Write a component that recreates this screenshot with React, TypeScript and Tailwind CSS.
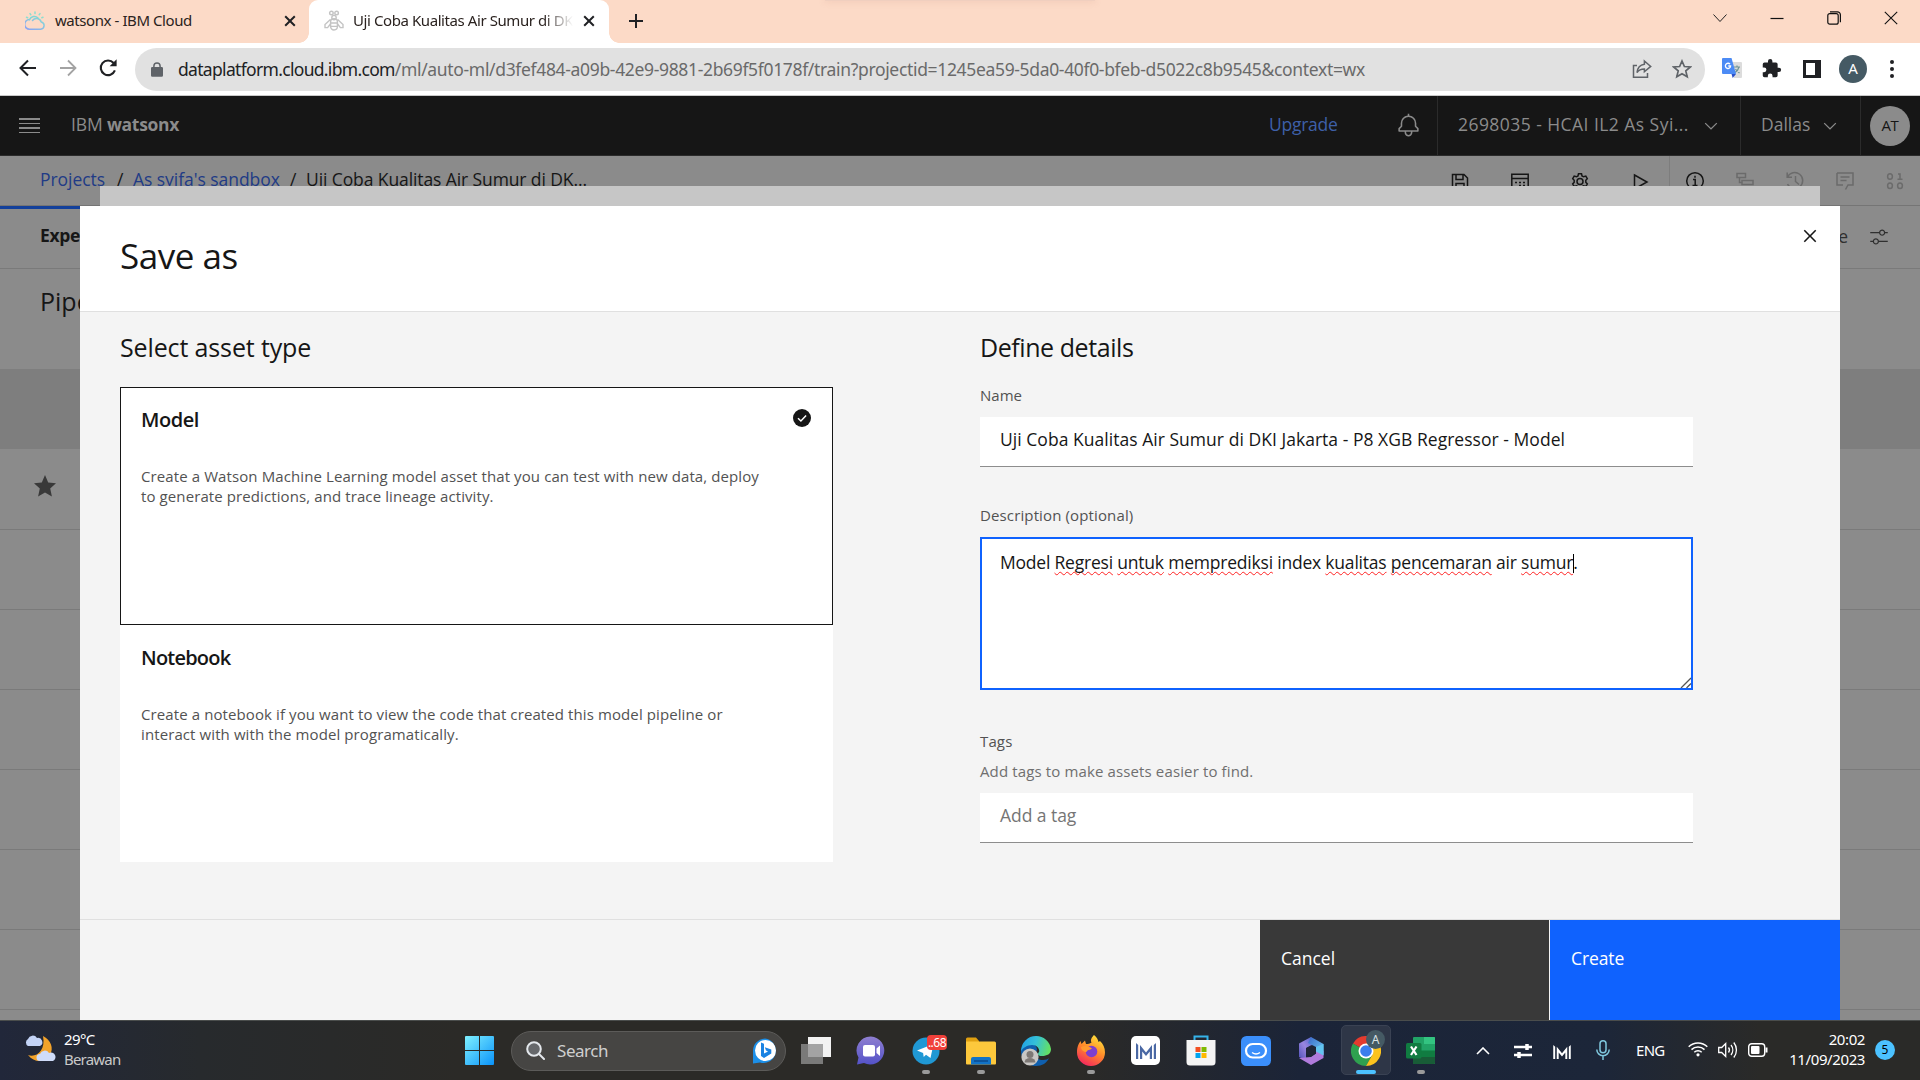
import React from "react";

const PLEX = "font-['Open_Sans',sans-serif]";
const SEGOE = "font-['Noto_Sans',sans-serif]";

function Carbon({ d, className }: { d: string; className: string }) {
  return (
    <svg viewBox="0 0 32 32" fill="currentColor" className={className}>
      <path d={d} />
    </svg>
  );
}

const CLOSE = "M24 9.4L22.6 8 16 14.6 9.4 8 8 9.4 14.6 16 8 22.6 9.4 24 16 17.4 22.6 24 24 22.6 17.4 16z";
const CHEVRON = "M16 22L6 12 7.4 10.6 16 19.2 24.6 10.6 26 12z";
const BELL =
  "M28.7 19.3L26 16.6V13a10 10 0 0 0-9-9.95V1h-2v2.05A10 10 0 0 0 6 13v3.6l-2.7 2.7A1 1 0 0 0 3 20v3a1 1 0 0 0 1 1h7v.78a5.15 5.15 0 0 0 4.5 5.2A5 5 0 0 0 21 25v-1h7a1 1 0 0 0 1-1v-3a1 1 0 0 0-.3-.7ZM19 25a3 3 0 0 1-6 0v-1h6Zm8-3H5v-1.6l2.7-2.7A1 1 0 0 0 8 17v-4a8 8 0 0 1 16 0v4a1 1 0 0 0 .3.7l2.7 2.7Z";
const ADJUST =
  "M30 8h-4.1c-.5-2.3-2.5-4-4.9-4s-4.4 1.7-4.9 4H2v2h14.1c.5 2.3 2.5 4 4.9 4s4.4-1.7 4.9-4H30V8z M21 12c-1.7 0-3-1.3-3-3s1.3-3 3-3 3 1.3 3 3S22.7 12 21 12z M2 24h4.1c.5 2.3 2.5 4 4.9 4s4.4-1.7 4.9-4H30v-2H15.9c-.5-2.3-2.5-4-4.9-4s-4.4 1.7-4.9 4H2V24z M11 20c1.7 0 3 1.3 3 3s-1.3 3-3 3-3-1.3-3-3S9.3 20 11 20z";

function TabX() {
  return (
    <svg viewBox="0 0 12 12" className="size-3 shrink-0" stroke="#202124" strokeWidth="2">
      <path d="M1.2 1.2l9.6 9.6M10.8 1.2l-9.6 9.6" />
    </svg>
  );
}

function TabStrip() {
  return (
    <div className={`flex h-[43px] shrink-0 items-stretch bg-[#fcdac7] text-[15px] text-[#2b2320] ${SEGOE}`}>
      <div className="flex w-[309px] items-center pr-0 pb-px pl-[25px]">
        <svg viewBox="0 0 20 20" className="-mt-px size-5 shrink-0" fill="none" strokeWidth="1.5" strokeLinecap="round">
          <defs>
            <linearGradient id="cloud" x1="1" y1="0" x2="0" y2="1">
              <stop offset="0" stopColor="#86dcd4" />
              <stop offset="1" stopColor="#8ba0f5" />
            </linearGradient>
          </defs>
          <path d="M4.400 8.600A4.600 4.600 0 0 0 4.600 18.200h11a3.700 3.700 0 0 0 .6-7.300A5 5 0 0 0 7.500 9.500" stroke="url(#cloud)" />
          <path d="M4.500 8.800a5.200 5.200 0 0 1 8.500-1.800" stroke="#7fd6d6" />
          <path d="M10 1v1.400M5 2.600l.8 1.100M15 2.600l-.8 1.100M1.500 6.200l1.200.5M18 6.200l-1.200.5" stroke="#8adfd0" />
        </svg>
        <span className="-mt-[2px] ml-[10px] w-[224px] whitespace-nowrap tracking-[-0.430px]">watsonx - IBM Cloud</span>
        <span className="ml-[5px]"><TabX /></span>
      </div>
      <div className="relative flex w-[300px] items-center rounded-t-[9px] bg-white pb-px pl-[15px]">
        <span className="absolute bottom-0 -left-[10px] size-[10px] bg-[radial-gradient(circle_at_0_0,transparent_9.500px,#fff_10px)]" />
        <span className="absolute -right-[10px] bottom-0 size-[10px] bg-[radial-gradient(circle_at_100%_0,transparent_9.500px,#fff_10px)]" />
        <svg viewBox="0 0 20 22" className="-mt-px h-[22px] w-5 shrink-0" fill="none" stroke="#c4c4c4" strokeWidth="1.400">
          <circle cx="7.400" cy="3" r="1.800" />
          <circle cx="12.600" cy="3" r="1.800" />
          <circle cx="10" cy="7.600" r="2.200" />
          <path d="M6.600 12a3.400 3.400 0 0 1 6.800 0v4.600a3.400 3.400 0 0 1-6.800 0zM6.600 13h6.800M6.600 16.400h6.800M6.400 9.600L1 14.600v3h2.600L6.400 14M13.600 9.600l5.400 5v3h-2.600L13.600 14" />
        </svg>
        <span className="-mt-[2px] ml-[9px] w-[220px] overflow-hidden whitespace-nowrap tracking-[-0.420px] [mask-image:linear-gradient(90deg,#000_190px,transparent_220px)]">
          Uji Coba Kualitas Air Sumur di DKI
        </span>
        <span className="ml-[10px]"><TabX /></span>
      </div>
      <div className="flex items-center pb-px pl-[20px]">
        <svg viewBox="0 0 14 14" className="size-[14px]" stroke="#202124" strokeWidth="2">
          <path d="M7 0v14M0 7h14" />
        </svg>
      </div>
      <div className="ml-[182px] h-px w-[270px] rounded-full bg-[#f0cfbf] shadow-[0_0_6px_1px_rgba(190,130,110,0.220)]" />
      <div className="ml-auto flex h-9 items-center gap-[43px] pr-[22px]">
        <svg viewBox="0 0 14 14" className="size-[14px]" fill="none" stroke="#222" strokeWidth="1">
          <path d="M.5 3.500L7 10.500l6.500-7" />
        </svg>
        <svg viewBox="0 0 14 14" className="size-[14px]" stroke="#111" strokeWidth="1.200">
          <path d="M.5 7.500h13" />
        </svg>
        <svg viewBox="0 0 14 14" className="size-[14px]" fill="none" stroke="#111" strokeWidth="1.200">
          <rect x=".8" y="2.600" width="10.400" height="10.600" rx="2" />
          <path d="M3 .8h7.400a3 3 0 0 1 3 3v7.400" />
        </svg>
        <svg viewBox="0 0 14 14" className="size-[14px]" stroke="#111" strokeWidth="1.100">
          <path d="M.8.8l12.400 12.400M13.200.8L.8 13.200" />
        </svg>
      </div>
    </div>
  );
}

function Toolbar() {
  return (
    <div className="flex h-[53px] shrink-0 items-center border-b border-[#c9c9c9] bg-white pl-[18px]">
      <svg viewBox="0 0 20 20" className="-mt-[2px] size-5" fill="none" stroke="#202124" strokeWidth="2">
        <path d="M18 10H3M10 2.500L2.500 10l7.500 7.500" />
      </svg>
      <svg viewBox="0 0 20 20" className="-mt-[2px] ml-5 size-5" fill="none" stroke="#a3a3a3" strokeWidth="1.800">
        <path d="M2 10h15M10 2.500l7.500 7.500-7.500 7.500" />
      </svg>
      <svg viewBox="0 0 20 20" className="-mt-[2px] ml-5 size-5" fill="none" stroke="#202124" strokeWidth="2.100">
        <path d="M16.900 12.400A7.300 7.300 0 1 1 15.600 5" />
        <path d="M18.600 1.200v7h-7z" fill="#202124" stroke="none" />
      </svg>
      <div className={`ml-[17px] flex h-[43px] w-[1570px] items-center rounded-full bg-[#e1e1e1] pl-4 text-[17.500px] ${SEGOE}`}>
        <svg viewBox="0 0 12 15" className="h-[15px] w-3" fill="#5f6368">
          <path d="M1.300 5h9.400A1.300 1.300 0 0 1 12 6.300v7.200a1.300 1.300 0 0 1-1.300 1.300H1.300A1.300 1.300 0 0 1 0 13.500V6.300A1.300 1.300 0 0 1 1.300 5z" />
          <path d="M2.900 6V4a3.100 3.100 0 0 1 6.200 0v2" fill="none" stroke="#5f6368" strokeWidth="1.500" />
        </svg>
        <span className="ml-[15px] w-[1200px] whitespace-nowrap tracking-[-0.335px] text-[#6a6a6a]">
          <span className="tracking-[-0.680px] text-[#202124]">dataplatform.cloud.ibm.com</span>
          /ml/auto-ml/d3fef484-a09b-42e9-9881-2b69f5f0178f/train?projectid=1245ea59-5da0-40f0-bfeb-d5022c8b9545&amp;context=wx
        </span>
        <svg viewBox="0 0 20 20" className="ml-auto size-5" fill="none" stroke="#5f6368" strokeWidth="1.500">
          <path d="M5 6.500H1.500v11.800h14V14" />
          <path d="M12.400 2l6.300 5.400-6.300 5.300V9.900c-3.500 0-5.700 1-7.400 3.600.5-4.600 3-7.700 7.400-8.300z" />
        </svg>
        <svg viewBox="0 0 20 20" className="mr-[13px] ml-5 size-5" fill="none" stroke="#5f6368" strokeWidth="1.700">
          <path d="M10 2l2.400 5.500 5.900.5-4.500 3.900 1.400 5.900L10 14.700l-5.200 3.100 1.400-5.900L1.700 8l5.900-.5z" />
        </svg>
      </div>
      <svg viewBox="0 0 20 20" className="-mt-[2px] ml-[17px] size-5">
        <path d="M9 4h10a1 1 0 0 1 1 1v14a1 1 0 0 1-1 1h-7z" fill="#dcdcdc" />
        <path d="M12 9h6M15 7.500V9M17 9c-.6 2.600-2.500 4.500-4 5.500M13.500 11c1 1.800 2.500 3 4 4" stroke="#6f9494" fill="none" strokeWidth="1.200" />
        <path d="M1 0h8.500l4.500 16H1a1 1 0 0 1-1-1V1a1 1 0 0 1 1-1z" fill="#4c8bf5" />
        <path d="M9.500 16H14l-3.300 4z" fill="#2b50c8" />
        <path d="M8 6.200A2.600 2.600 0 1 0 8.600 8H6.300" stroke="#fff" strokeWidth="1.300" fill="none" />
      </svg>
      <svg viewBox="0 0 24 24" className="-mt-[2px] ml-[19px] size-[21px]" fill="#202124">
        <path d="M20.500 11H19V7a2 2 0 0 0-2-2h-4V3.500a2.500 2.500 0 0 0-5 0V5H4a2 2 0 0 0-2 2v3.800h1.500a2.700 2.700 0 0 1 0 5.400H2V20a2 2 0 0 0 2 2h3.800v-1.500a2.700 2.700 0 0 1 5.400 0V22H17a2 2 0 0 0 2-2v-4h1.500a2.500 2.500 0 0 0 0-5z" />
      </svg>
      <span className="-mt-px ml-[21px] flex h-[18px] w-[18px] border-[3px] border-r-[6px] border-[#202124] bg-white" />
      <span className={`-mt-px ml-[18px] flex size-7 items-center justify-center rounded-full bg-[#455a64] text-[15px] text-white ${SEGOE}`}>A</span>
      <span className="-mt-px ml-[23px] flex flex-col gap-[3px]">
        <span className="size-1 rounded-full bg-[#202124]" />
        <span className="size-1 rounded-full bg-[#202124]" />
        <span className="size-1 rounded-full bg-[#202124]" />
      </span>
    </div>
  );
}

function AppHeader() {
  return (
    <div className="flex h-[60px] shrink-0 items-stretch border-b border-[#2b2b2b] bg-[#161616] text-[17.500px] text-[#8b8b8b]">
      <div className="flex w-[1254px] items-center pl-[19px]">
        <span className="flex w-[21px] flex-col gap-[3px]">
          <span className="h-[1.500px] bg-[#8b8b8b]" />
          <span className="h-[1.500px] bg-[#8b8b8b]" />
          <span className="h-[1.500px] bg-[#8b8b8b]" />
          <span className="h-[1.500px] bg-[#8b8b8b]" />
        </span>
        <span className="-mt-[3px] ml-[31px] tracking-[-0.150px]">IBM <b className="font-bold tracking-[-0.300px]">watsonx</b></span>
      </div>
      <div className="flex w-[184px] items-center border-r border-[#2b2b2b] pl-[15px] text-[#3e60a8]">
        <span className="-mt-[3px] w-[127px] tracking-[-0.250px]">Upgrade</span>
        <Carbon d={BELL} className="size-[25px] text-[#8b8b8b]" />
      </div>
      <div className="flex w-[303px] items-center border-r border-[#2b2b2b] pl-[20px]">
        <span className="-mt-[3px] w-[243px] tracking-[0.450px] whitespace-nowrap">2698035 - HCAI IL2 As Syi...</span>
        <Carbon d={CHEVRON} className="size-5" />
      </div>
      <div className="flex w-[120px] items-center border-r border-[#2b2b2b] pl-[20px]">
        <span className="-mt-[3px] w-[59px]">Dallas</span>
        <Carbon d={CHEVRON} className="size-5" />
      </div>
      <div className="flex items-center pl-[9px]">
        <span className="flex size-10 items-center justify-center rounded-full bg-[#8b8b8b] pb-px text-[15px] tracking-[-0.300px] text-[#161616]">AT</span>
      </div>
    </div>
  );
}

function Line({ children, className }: { children: React.ReactNode; className?: string }) {
  return (
    <svg viewBox="0 0 20 20" fill="none" stroke="currentColor" strokeWidth="1.500" className={`size-5 shrink-0 ${className ?? ""}`}>
      {children}
    </svg>
  );
}

function Breadcrumbs() {
  return (
    <div className="flex h-[50px] shrink-0 items-stretch border-b border-[#757575] text-[17.500px] text-[#161616]">
      <div className="flex flex-1 pt-[11px] pl-[40px] leading-6 whitespace-nowrap">
        <span className="w-[77px] tracking-[-0.050px] text-[#213b86]">Projects</span>
        <span className="w-[16px]">/</span>
        <span className="w-[157px] tracking-[-0.050px] text-[#213b86]">As syifa's sandbox</span>
        <span className="w-[16px]">/</span>
        <span className="tracking-[-0.100px]">Uji Coba Kualitas Air Sumur di DK...</span>
      </div>
      <div className="flex w-[220px] gap-10 border-r border-[#7d7d7d] pt-[16px]">
        <Line>
          <path d="M2.500 2.500h11.500l3.500 3.500v11.500h-15zM6 2.500v5h7v-5M6 17.500v-6h8v6" />
        </Line>
        <Line>
          <path d="M1.800 2.300h16.400v15.400H1.800zM2 6.500h16" />
          <path d="M5 10.500h2M9 10.500h2M9 13.500h2M13 13.500h2M13 10.500h2" />
        </Line>
        <Line>
          <path d="M8.500 1.700h3l.5 2.300 1.500.8 2.300-.7 1.500 2.600-1.500 1.600v2l1.500 1.600-1.500 2.600-2.300-.7-1.500.9-.5 2.300h-3L8 14.700l-1.500-.9-2.300.7-1.500-2.600L4.200 10.300v-2L2.700 6.700l1.500-2.600 2.300.7L8 4z" />
          <circle cx="10" cy="9.400" r="3" />
        </Line>
        <Line>
          <path d="M4.500 3l12.500 7-12.500 7z" />
        </Line>
      </div>
      <div className="flex w-[250px] gap-[30px] pt-[15px] pl-[15px] text-[#6b6b6b]">
        <Line className="text-[#161616]">
          <circle cx="10" cy="10" r="8.300" />
          <path d="M8 8.500h2.200v6M7.500 14.500h5M10 4.800v1.900" />
        </Line>
        <Line>
          <path d="M2 2.500h8.500v4H2zM7 9.500h11v4H7zM4.500 6.500v5H7M2 16.500h8.500" />
        </Line>
        <Line>
          <path d="M2.500 6a8 8 0 1 1 0 7M2.200 1.500V6.300H7M10.500 5v5.500l3.500 3" />
        </Line>
        <Line>
          <path d="M2 2h16v12h-5l-2.500 4.500M2 2v12h6M5.500 6h9M5.500 9.500h6" />
        </Line>
        <Line>
          <ellipse cx="5" cy="5.500" rx="2.400" ry="2.800" />
          <path d="M13 3h2v5.300M12.500 8.300h5" />
          <ellipse cx="5" cy="14.800" rx="2.400" ry="2.800" />
          <ellipse cx="15" cy="14.800" rx="2.400" ry="2.800" />
        </Line>
      </div>
    </div>
  );
}

const ROWS = [0, 1, 2, 3, 4, 5, 6];

function Backdrop() {
  return (
    <div className="flex flex-1 flex-col overflow-hidden bg-[#8b8b8b] text-[#161616]">
      <Breadcrumbs />
      <div className="flex h-[63px] shrink-0 items-stretch border-b border-[#7a7a7a] text-[17.500px]">
        <div className="flex w-[82px] items-center border-t-[3px] border-[#13409b] pb-[6px] pl-[40px] font-bold tracking-[-0.300px]">Expe</div>
        <div className="ml-auto flex items-center pr-[21px] pb-[2px] text-[#2f2f2f]">e</div>
        <Carbon d={ADJUST} className="mt-[21px] mr-[31px] size-5 text-[#2f2f2f]" />
      </div>
      <div className="h-[100px] shrink-0 pt-[16px] pl-[40px] text-[25px] leading-8 whitespace-nowrap">Pipe</div>
      <div className="h-20 shrink-0 bg-[#7e7e7e]" />
      {ROWS.map((r) => (
        <div key={r} className={`flex shrink-0 items-center border-b border-[#7a7a7a] pb-[7px] pl-[33px] ${r === 0 ? "h-[81px]" : "h-20"}`}>
          {r === 0 && (
            <svg viewBox="0 0 24 24" className="size-6" fill="#393939">
              <path d="M12 1l3.200 7.500 7.800.8-5.800 5.300 1.700 7.900L12 18.400l-6.900 4.100 1.700-7.900L1 9.300l7.800-.8z" />
            </svg>
          )}
        </div>
      ))}
    </div>
  );
}

function AssetTile({ title, lines, selected }: { title: string; lines: string[]; selected?: boolean }) {
  return (
    <div className={selected ? "h-[238px] border border-[#161616] bg-white pt-5 pl-5" : "h-[237px] bg-white pt-[21px] pl-[21px]"}>
      <div className="flex justify-between pr-[21px]">
        <h3 className={`text-[20px] leading-6 font-semibold text-[#161616] ${selected ? "tracking-[-0.450px]" : "tracking-[-0.780px]"}`}>{title}</h3>
        {selected && (
          <svg viewBox="0 0 18 18" className="mt-[1px] size-[18px]">
            <circle cx="9" cy="9" r="9" fill="#161616" />
            <path d="M5 9.200l2.900 2.800 5.200-5.500" fill="none" stroke="#fff" strokeWidth="1.500" />
          </svg>
        )}
      </div>
      <div className="mt-[34px] text-[15px] leading-5 tracking-[0.100px] whitespace-nowrap text-[#525252]">
        {lines.map((l) => (
          <div key={l}>{l}</div>
        ))}
      </div>
    </div>
  );
}

function Typo({ children }: { children: string }) {
  return (
    <span className="underline decoration-[#f22] decoration-wavy decoration-1 underline-offset-[2px] [text-decoration-skip-ink:none]">
      {children}
    </span>
  );
}

function SaveDialog() {
  return (
    <div className="absolute top-[110px] left-[80px] flex h-[814px] w-[1760px] flex-col bg-[#f4f4f4] text-[#161616]">
      <div className="flex h-[106px] shrink-0 justify-between border-b border-[#e0e0e0] bg-white pt-[28px] pr-5 pl-10">
        <h1 className="text-[35px] leading-[44px] font-normal tracking-[-0.450px]">Save as</h1>
        <Carbon d={CLOSE} className="-mt-[8px] size-[20px] scale-125" />
      </div>
      <div className="flex h-[608px] shrink-0 border-b border-[#e0e0e0] pt-[19px] pl-10">
        <div className="w-[860px]">
          <h2 className="text-[25px] leading-8 tracking-[-0.130px]">Select asset type</h2>
          <div className="mt-[24px] w-[713px]">
            <AssetTile
              selected
              title="Model"
              lines={[
                "Create a Watson Machine Learning model asset that you can test with new data, deploy",
                "to generate predictions, and trace lineage activity.",
              ]}
            />
            <AssetTile
              title="Notebook"
              lines={[
                "Create a notebook if you want to view the code that created this model pipeline or",
                "interact with with the model programatically.",
              ]}
            />
          </div>
        </div>
        <div className="w-[713px] text-[15px] leading-5 tracking-[0.130px] text-[#525252]">
          <h2 className="text-[25px] leading-8 tracking-[-0.430px] text-[#161616]">Define details</h2>
          <div className="mt-[22px] tracking-normal">Name</div>
          <div className="mt-[12px] h-[50px] border-b border-[#8d8d8d] bg-white pt-[10px] pl-5 text-[17.500px] leading-6 tracking-[0.035px] text-[#161616]">
            Uji Coba Kualitas Air Sumur di DKI Jakarta - P8 XGB Regressor - Model
          </div>
          <div className="mt-[38px]">Description (optional)</div>
          <div className="relative mt-[12px] h-[153px] border-2 border-[#0f62fe] bg-white pt-[11px] pl-[18px] text-[17.500px] leading-6 tracking-[-0.210px] text-[#161616]">
            Model <Typo>Regresi</Typo> <Typo>untuk</Typo> <Typo>memprediksi</Typo> index <Typo>kualitas</Typo>{" "}
            <Typo>pencemaran</Typo> air <Typo>sumur</Typo>
            <span className="-mr-px inline-block h-[19px] w-px bg-black align-[-4px]" />.
            <svg viewBox="0 0 11 11" className="absolute right-0 bottom-0 size-[11px]" stroke="#555" strokeWidth="1.300">
              <path d="M1 11L11 1M6.500 11L11 6.500" />
            </svg>
          </div>
          <div className="mt-[41px]">Tags</div>
          <div className="mt-[10px] text-[#6f6f6f]">Add tags to make assets easier to find.</div>
          <div className="mt-[12px] h-[50px] border-b border-[#8d8d8d] bg-white pt-[10px] pl-5 text-[17.500px] leading-6 tracking-[-0.050px] text-[#757575]">
            Add a tag
          </div>
        </div>
      </div>
      <div className="flex h-[100px] justify-end text-[17.500px] leading-6 text-white">
        <div className="w-[289px] bg-[#393939] pt-[26px] pl-[21px]">Cancel</div>
        <div className="ml-px w-[290px] bg-[#0f62fe] pt-[26px] pl-[21px] tracking-[-0.100px]">Create</div>
      </div>
    </div>
  );
}

function TaskItem({ children, pill }: { children: React.ReactNode; pill?: boolean }) {
  return (
    <div className="relative flex h-full w-[55px] items-center justify-center">
      {children}
      {pill && <span className="absolute bottom-[6px] h-1 w-2 rounded-full bg-[#9a9a9a]" />}
    </div>
  );
}

function MLogo({ className, fill }: { className: string; fill: string }) {
  return (
    <svg viewBox="0 0 20 16" className={className} fill={fill}>
      <path d="M0 0l2.200 2V16H0zM4 2l6 7.500L16 2v14h-2.200V8.500L10 13 6.200 8.500V16H4zM20 0l-2.200 2V16H20z" />
    </svg>
  );
}

function Taskbar() {
  return (
    <div
      className={`flex h-[60px] shrink-0 items-center border-t border-[#4a4d4c] bg-[linear-gradient(90deg,#21273a_0px,#272a2d_200px,#2b2a27_460px,#2b2a27_1080px,#1b2438_1300px,#1c2639_1600px,#2a2a28_1760px,#2a2a28_1920px)] text-white ${SEGOE}`}
    >
      <div className="flex w-[452px] items-center pl-[24px] text-[15px] leading-5">
        <svg viewBox="0 0 32 30" className="-mt-1 h-[30px] w-8">
          <path d="M19 2c8 4 11 12 7 19s-15 9-22 0c8 3 18-4 15-19z" fill="#f3a32a" />
          <path d="M4 12a4 4 0 0 1 0-7 5 5 0 0 1 9-1 4.300 4.300 0 0 1 3 8z" fill="#c3d3f6" />
          <path d="M16 27a3.500 3.500 0 0 1 0-7 5 5 0 0 1 9-1 4 4 0 0 1 4 8z" fill="#cfdcf9" />
        </svg>
        <div className="-mt-1 ml-2">
          <div className="tracking-[-0.600px]">29°C</div>
          <div className="tracking-[-0.800px] text-[#c9c9c9]">Berawan</div>
        </div>
      </div>
      <TaskItem>
        <svg viewBox="0 0 29 29" className="size-[29px]">
          <defs>
            <linearGradient id="win" x1="0" y1="0" x2="1" y2="1">
              <stop offset="0" stopColor="#7ff0ff" />
              <stop offset="1" stopColor="#0a93fa" />
            </linearGradient>
          </defs>
          <path d="M0 1a1 1 0 0 1 1-1h13v14H0zM15 0h13a1 1 0 0 1 1 1v13H15zM0 15h14v14H1a1 1 0 0 1-1-1zM15 15h14v13a1 1 0 0 1-1 1H15z" fill="url(#win)" />
        </svg>
      </TaskItem>
      <div className="ml-[4px] flex h-10 w-[275px] items-center rounded-full border border-[#5c5b59] bg-[#464543] pl-[14px]">
        <svg viewBox="0 0 19 19" className="size-[19px]" fill="#66686b" stroke="#e4e8ec" strokeWidth="2" strokeLinecap="round">
          <circle cx="8" cy="8" r="6.800" />
          <path d="M13 13l5 5" />
        </svg>
        <span className="ml-3 text-[17px] tracking-[-0.450px] text-[#cfcfcf]">Search</span>
        <svg viewBox="0 0 26 26" className="mr-[7px] ml-auto size-[26px]">
          <path d="M13 .5A12.300 12.300 0 1 1 8 24.500L1 25.500V13A12.300 12.300 0 0 1 13 .5z" fill="#1c8fe8" />
          <circle cx="13.500" cy="12.500" r="10.500" fill="#fff" />
          <path d="M9 4.500l3 1.200v9.800l4-2-2-1-1.200-3.300 6.500 2.400v4L12 20l-3-2z" fill="#1b83e2" />
        </svg>
      </div>
      <div className="ml-[2px] flex h-full items-center">
        <TaskItem>
          <span className="relative block h-[27px] w-[30px]">
            <span className="absolute top-0 right-0 h-5 w-[23px] bg-[#f2f2f2]" />
            <span className="absolute bottom-0 left-0 h-5 w-[22px] bg-[#8e8e8e]/80" />
          </span>
        </TaskItem>
        <TaskItem>
          <svg viewBox="0 0 29 29" className="size-[29px]">
            <defs>
              <linearGradient id="chat" x1="0" y1="0" x2="0" y2="1">
                <stop offset="0" stopColor="#8f7fd0" />
                <stop offset="1" stopColor="#5452c8" />
              </linearGradient>
            </defs>
            <path d="M15 .5A14 14 0 1 1 8 27L1 28.500l1.500-7A14 14 0 0 1 15 .5z" fill="url(#chat)" />
            <rect x="7" y="9" width="12" height="11.500" rx="2" fill="#fff" />
            <path d="M20.500 12.500l3.500-3v10.500l-3.500-3z" fill="#fff" />
          </svg>
        </TaskItem>
        <TaskItem pill>
          <svg viewBox="0 0 28 28" className="size-7">
            <circle cx="14" cy="14" r="13.500" fill="#2098d4" />
            <path d="M5 13.500L21.500 7 18.500 21l-4.500-3.200-2.300 2.300-.6-4z" fill="#fff" />
          </svg>
          <span className="absolute top-[14px] left-[29px] flex h-[15px] w-[20px] items-center justify-center rounded-[4px] bg-[#f0403a] text-[12px] tracking-[-0.500px]">..68</span>
        </TaskItem>
        <TaskItem pill>
          <svg viewBox="0 0 30 28" className="h-7 w-[30px]">
            <path d="M0 2a1.500 1.500 0 0 1 1.500-1.500H10L13 4v3H0z" fill="#e0a010" />
            <path d="M0 4.500h28.500A1.500 1.500 0 0 1 30 6v20.500a1 1 0 0 1-1 1H1a1 1 0 0 1-1-1z" fill="#fdc83c" />
            <path d="M5 27.500V22a2 2 0 0 1 2-2h16a2 2 0 0 1 2 2v5.500z" fill="#1273c6" />
            <path d="M8 24h14" stroke="#0b4a8c" strokeWidth="1.500" />
          </svg>
        </TaskItem>
        <TaskItem>
          <svg viewBox="0 0 30 30" className="size-[30px]">
            <defs>
              <linearGradient id="edge" x1="0" y1="0.200" x2="1" y2="0.400">
                <stop offset="0" stopColor="#1f9fe6" />
                <stop offset="0.500" stopColor="#35c1d8" />
                <stop offset="1" stopColor="#63e064" />
              </linearGradient>
            </defs>
            <path d="M0 14C2 8 8 6 12 8c4 2 5 6 3 8-2 5 2 8 7 8 3 0 5-1 6-2-2 5-7 8-13 8A15 15 0 0 1 0 14z" fill="#0f5fae" />
            <path d="M15 0a15 15 0 0 1 15 13c0 5-4 7-9 7-4 0-5-2-3-4 1-2-1-7-7-7-5 0-9 3-11 6A15 15 0 0 1 15 0z" fill="url(#edge)" />
            <circle cx="9" cy="21" r="8.600" fill="#c9c7c5" />
            <circle cx="9" cy="18.500" r="3.500" fill="#7d7875" />
            <path d="M3.500 26.500a5.500 4.500 0 0 1 11 0z" fill="#7d7875" />
          </svg>
        </TaskItem>
        <TaskItem pill>
          <svg viewBox="0 0 28 31" className="h-[31px] w-7">
            <defs>
              <linearGradient id="fox" x1="0.800" y1="0" x2="0.300" y2="1">
                <stop offset="0" stopColor="#ffe83c" />
                <stop offset="0.500" stopColor="#ff8a2a" />
                <stop offset="1" stopColor="#f4265e" />
              </linearGradient>
            </defs>
            <path d="M17 0c3 2 4 5 4.500 7L23 6c3 3 5 6.500 5 11.500A14 13.500 0 0 1 0 17.500C0 12 1.500 9 3.500 6l1 3L8 5.500 9 9c2 0 4 0 5.500-1.500C13 5 15 2 17 0z" fill="url(#fox)" />
            <circle cx="14.500" cy="16.500" r="5.800" fill="#7c3fd0" />
            <path d="M4 12c4-2 8-1 11 1.500-2 2-5 1-5.500 3.500C7 17 4 15 4 12z" fill="#ff9a2e" />
          </svg>
        </TaskItem>
        <TaskItem>
          <span className="flex size-[29px] items-center justify-center rounded-[5px] bg-white">
            <MLogo className="h-4 w-5" fill="#4a68a4" />
          </span>
        </TaskItem>
        <TaskItem>
          <svg viewBox="0 0 30 31" className="h-[31px] w-[30px]">
            <path d="M8.500 6V1.500h13V6" fill="none" stroke="#35b3ea" strokeWidth="2" />
            <path d="M.5 5h29v22a3.500 3.500 0 0 1-3.500 3.500H4A3.500 3.500 0 0 1 .5 27z" fill="#f4f4f4" />
            <path d="M9.500 12h5v5h-5z" fill="#f25022" />
            <path d="M15.500 12h5v5h-5z" fill="#7fba00" />
            <path d="M9.500 18h5v5h-5z" fill="#00a4ef" />
            <path d="M15.500 18h5v5h-5z" fill="#ffb900" />
          </svg>
        </TaskItem>
        <TaskItem>
          <svg viewBox="0 0 30 30" className="size-[30px]">
            <rect width="30" height="30" rx="5.500" fill="#3b8ffb" />
            <rect x="5" y="8" width="20" height="13.500" rx="6.700" fill="none" stroke="#fff" strokeWidth="2.200" />
            <path d="M11 16.500c2.500 1.800 5.500 1.800 8 0" fill="none" stroke="#fff" strokeWidth="1.400" />
          </svg>
        </TaskItem>
        <TaskItem>
          <svg viewBox="0 0 28 30" className="h-[30px] w-7">
            <defs>
              <linearGradient id="hexLeft" x1="1" y1="0" x2="0" y2="1">
                <stop offset="0" stopColor="#4660c8" />
                <stop offset="0.500" stopColor="#9a86e0" />
                <stop offset="1" stopColor="#4d4fb8" />
              </linearGradient>
              <linearGradient id="hexRight" x1="0" y1="0" x2="1" y2="1">
                <stop offset="0" stopColor="#3a67c8" />
                <stop offset="1" stopColor="#6fd0f5" />
              </linearGradient>
            </defs>
            <path d="M14 1L2 7.500V21l7 3V12l8-4z" fill="url(#hexLeft)" />
            <path d="M14 1l12.500 7v11L19 15v-4L11 7z" fill="url(#hexRight)" />
            <path d="M26.500 15v7L14 29 2 22l12-1 5-3.500V12z" fill="#b07bdc" />
            <path d="M26.500 8v11.500L19 15.500V11z" fill="#62c4f0" />
            <path d="M14 9.500l5 2.700v5.300L14 20.500l-5-3v-5.300z" fill="#202638" />
          </svg>
        </TaskItem>
        <TaskItem>
          <span className="absolute top-1 h-[50px] w-[50px] rounded-[5px] border border-[#3a4253] bg-[#2e3647]" />
          <svg viewBox="0 0 30 30" className="relative size-[30px]">
            <path d="M15 15L2 7.500A15 15 0 0 1 28 7.500z" fill="#e43b2e" />
            <path d="M15 15L2 7.500A15 15 0 0 0 15 30l6.500-11.500z" fill="#2fa14f" />
            <path d="M15 15l6.500 3.500L15 30A15 15 0 0 0 28 7.500H15z" fill="#fcc31e" />
            <circle cx="15" cy="15" r="7.500" fill="#fff" />
            <circle cx="15" cy="15" r="5.800" fill="#3b7ded" />
          </svg>
          <span className="absolute top-[9px] left-[28px] flex size-[19px] items-center justify-center rounded-full bg-[#455a64] text-[12px] text-[#dce3e6]">A</span>
          <span className="absolute bottom-[6px] h-1 w-5 rounded-full bg-[#4cc2ff]" />
        </TaskItem>
        <TaskItem pill>
          <svg viewBox="0 0 29 29" className="size-[29px]">
            <rect x="7" y="1" width="22" height="27" rx="1" fill="#21a366" />
            <path d="M18 1h10a1 1 0 0 1 1 1v6H18z" fill="#33c481" />
            <path d="M18 14.500h11V21H18zM7 14.500h11V21H7z" fill="#107c41" />
            <path d="M7 21h22v6a1 1 0 0 1-1 1H7z" fill="#185c37" />
            <rect x="0" y="7" width="15.500" height="15.500" rx="1.500" fill="#107c41" />
            <path d="M5 10.500l5.500 8.500M10.500 10.500L5 19" stroke="#fff" strokeWidth="2.200" />
          </svg>
        </TaskItem>
      </div>
      <div className="ml-[28px] flex items-center">
        <svg viewBox="0 0 14 8" className="h-2 w-[14px]" fill="none" stroke="#fff" strokeWidth="1.600">
          <path d="M1 7l6-6 6 6" />
        </svg>
        <svg viewBox="0 0 18 16" className="ml-[24px] h-4 w-[18px]" stroke="#fff" strokeWidth="2.400">
          <path d="M0 4h18M0 12h18" />
          <path d="M13 1v6M5 9v6" strokeWidth="3.500" />
        </svg>
        <MLogo className="mt-[2px] ml-[21px] h-[14px] w-[18px]" fill="#fff" />
        <svg viewBox="0 0 14 20" className="-mt-[2px] ml-[25px] h-5 w-[14px]" fill="none" stroke="#7fc8de" strokeWidth="1.500">
          <rect x="4" y=".8" width="6" height="12" rx="3" />
          <path d="M.8 9.500a6.200 6.200 0 0 0 12.400 0M7 16v4" />
        </svg>
        <span className="-mt-px ml-[26px] w-[30px] text-[15px] tracking-[-0.700px]">ENG</span>
        <svg viewBox="0 0 20 16" className="-mt-[3px] ml-[22px] h-4 w-5" fill="none" stroke="#fff" strokeWidth="1.500">
          <path d="M.7 5.800a13.200 13.200 0 0 1 18.600 0M3.500 8.600a9.200 9.200 0 0 1 13 0M6.300 11.300a5.200 5.200 0 0 1 7.400 0" />
          <circle cx="10" cy="13.800" r="1.600" fill="#fff" stroke="none" />
        </svg>
        <svg viewBox="0 0 20 18" className="-mt-[2px] ml-[10px] h-[18px] w-5" fill="none" stroke="#fff" strokeWidth="1.300">
          <path d="M.7 6.500h3l4-4v13l-4-4h-3zM10.500 6.500a4 4 0 0 1 0 5M13 4a8 8 0 0 1 0 10M15.800 1.500a12 12 0 0 1 0 15" />
        </svg>
        <svg viewBox="0 0 20 14" className="-mt-[2px] ml-[10px] h-[14px] w-5" fill="none" stroke="#fff" strokeWidth="1.400">
          <rect x=".7" y=".7" width="16" height="12.600" rx="3" />
          <rect x="3" y="3" width="8.500" height="8" rx="1" fill="#fff" stroke="none" />
          <path d="M18.500 4.500v5" strokeWidth="2" />
        </svg>
      </div>
      <div className="-mt-1 ml-auto text-right text-[15px] leading-5 tracking-[-0.400px]">
        <div>20:02</div>
        <div>11/09/2023</div>
      </div>
      <span className="-mt-px mr-[25px] ml-[10px] flex size-5 items-center justify-center rounded-full bg-[#4cc2ff] text-[12px] text-black">5</span>
    </div>
  );
}

export default function App() {
  return (
    <div className="flex h-[1080px] w-[1920px] flex-col overflow-hidden bg-white">
      <TabStrip />
      <Toolbar />
      <div className={`relative flex h-[924px] shrink-0 flex-col overflow-hidden ${PLEX}`}>
        <AppHeader />
        <Backdrop />
        <div className="absolute top-[90px] left-[100px] h-[20px] w-[1720px] bg-[#c6c6c6]" />
        <SaveDialog />
      </div>
      <Taskbar />
    </div>
  );
}
